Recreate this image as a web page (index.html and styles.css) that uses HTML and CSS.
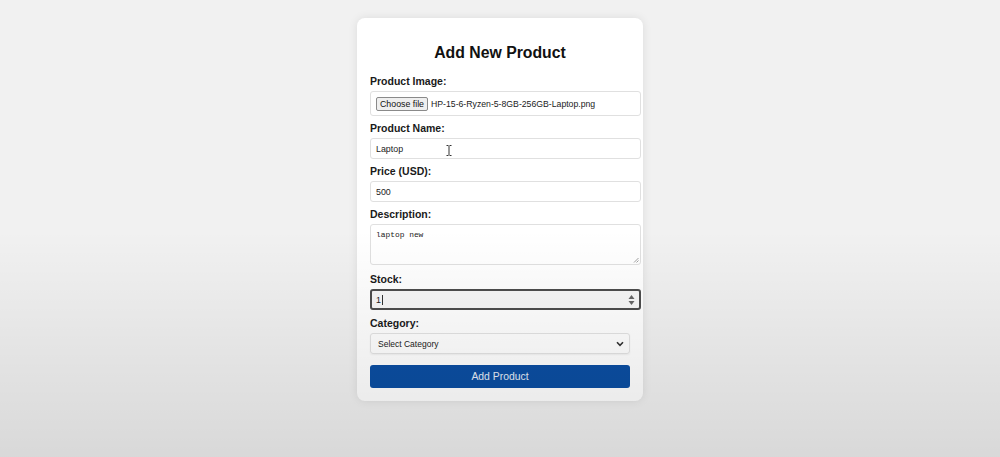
FILE: index.html
```html
<!DOCTYPE html>
<html lang="en">
<head>
<meta charset="utf-8">
<title>Add New Product</title>
<link rel="stylesheet" href="styles.css">
</head>
<body>
<main class="page">
  <form class="card">
    <h2 class="title">Add New Product</h2>

    <label class="label">Product Image:</label>
    <div class="field file-field">
      <span class="file-btn">Choose file</span>
      <span class="file-name">HP-15-6-Ryzen-5-8GB-256GB-Laptop.png</span>
    </div>

    <label class="label">Product Name:</label>
    <div class="field text-field">
      <span>Laptop</span>
      <svg class="ibeam" width="6" height="11" viewBox="0 0 6 11"><path d="M0.5 0.5h2M3.5 0.5h2M3 1v9M0.5 10.5h2M3.5 10.5h2" stroke="#333" stroke-width="1" fill="none"/></svg>
    </div>

    <label class="label">Price (USD):</label>
    <div class="field text-field"><span>500</span></div>

    <label class="label">Description:</label>
    <div class="field area-field">
      <span>laptop new</span>
      <svg class="grip" width="6" height="6" viewBox="0 0 6 6"><path d="M5.5 1L1 5.5M5.5 3.5L3.5 5.5" stroke="#888" stroke-width="0.8"/></svg>
    </div>

    <label class="label label-stock">Stock:</label>
    <div class="field number-field">
      <span class="num">1</span><span class="caret"></span>
      <svg class="spin" width="7" height="12" viewBox="0 0 7 12"><path d="M3.5 1L6.5 5H0.5Z M3.5 11L0.5 7H6.5Z" fill="#666"/></svg>
    </div>

    <label class="label">Category:</label>
    <div class="select-field">
      <span>Select Category</span>
      <svg width="8" height="6" viewBox="0 0 8 6"><path d="M1 1.2L4 4.4L7 1.2" stroke="#333" stroke-width="1.6" fill="none"/></svg>
    </div>

    <div class="submit">Add Product</div>
  </form>
</main>
<div class="shade"></div>
</body>
</html>
```
FILE: styles.css
```css
html, body {
  margin: 0;
  padding: 0;
}
body {
  background: #f1f1f1;
  font-family: "Liberation Sans", Arial, sans-serif;
  color: #111;
  height: 457px;
  overflow: hidden;
  position: relative;
}
.page {
  display: flex;
  justify-content: center;
  padding-top: 18px;
}
.card {
  width: 260px;
  padding: 13px;
  background: #fff;
  border-radius: 8px;
  box-shadow: 0 0 10px rgba(0, 0, 0, 0.09);
  display: flex;
  flex-direction: column;
}
.title {
  margin: 12px 0 11px;
  font-size: 15.8px;
  line-height: 20px;
  font-weight: bold;
  text-align: center;
  color: #111;
}
.label {
  display: block;
  font-size: 10.5px;
  line-height: 14px;
  font-weight: bold;
  color: #1a1a1a;
  margin-bottom: 3px;
}
.label-stock {
  margin-top: 2px;
}
.field {
  width: 259px;
  padding: 0 5px;
  border: 1px solid #e0e0e0;
  border-radius: 3px;
  font-size: 8.9px;
  color: #222;
  display: flex;
  align-items: center;
  margin-bottom: 5px;
  position: relative;
}
.file-field {
  height: 23px;
  gap: 3px;
}
.file-btn {
  font-size: 8.8px;
  line-height: 12px;
  padding: 0 3px;
  background: #efefef;
  border: 1px solid #8a8a8a;
  border-radius: 2px;
  color: #111;
}
.file-name {
  font-size: 8.7px;
  color: #222;
}
.text-field {
  height: 19px;
}
.ibeam {
  position: absolute;
  left: 75px;
  top: 6px;
}
.area-field {
  align-items: flex-start;
  padding-top: 5px;
  box-sizing: content-box;
  height: 34px;
  font-family: "Liberation Mono", "DejaVu Sans Mono", monospace;
  font-size: 7.9px;
}
.grip {
  position: absolute;
  right: 1px;
  bottom: 1px;
}
.number-field {
  height: 17px;
  border: 2px solid #4d4d4d;
  border-radius: 3px;
  background: #f7f7f7;
  padding: 0 4px;
  margin-bottom: 6px;
  width: 259px;
}
.num {
  font-size: 8.9px;
}
.caret {
  display: inline-block;
  width: 1px;
  height: 10px;
  background: #333;
  margin-left: 1px;
}
.spin {
  margin-left: auto;
}
.select-field {
  height: 19px;
  border: 1px solid #e3e3e3;
  border-radius: 3px;
  padding: 0 5px 0 7px;
  box-shadow: 0 1px 2px rgba(0, 0, 0, 0.06);
  display: flex;
  align-items: center;
  justify-content: space-between;
  font-size: 8.5px;
  color: #222;
  margin-bottom: 11px;
}
.submit {
  height: 23px;
  background: #0b4ea2;
  border-radius: 3px;
  color: #e8eef8;
  font-size: 10.4px;
  display: flex;
  align-items: center;
  justify-content: center;
}
.shade {
  position: absolute;
  left: 0;
  top: 0;
  width: 100%;
  height: 100%;
  pointer-events: none;
  background: linear-gradient(to bottom, rgba(0,0,0,0) 0, rgba(0,0,0,0) 230px, rgba(0,0,0,0.1) 457px);
}
```
